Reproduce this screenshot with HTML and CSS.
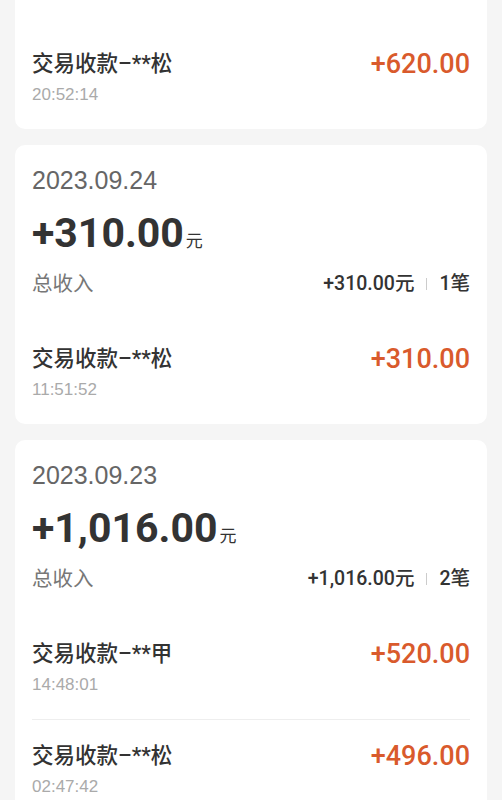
FILE: index.html
```html
<!DOCTYPE html>
<html lang="zh-CN">
<head>
    <meta charset="UTF-8">
    <meta name="viewport" content="width=device-width, initial-scale=1.0">
    <title>收款记录</title>
    <link rel="stylesheet" href="styles.css">
</head>
<body>

    <div class="lista">

        <!-- dia 25 (cortado arriba) -->
        <div class="dia">
            <div class="fecha">2023.09.25</div>
            <div class="total">+620.00<span class="yuan">元</span></div>
            <div class="resumen">
                <span class="etiqueta">总收入</span>
                <span class="cifras">+620.00元<i class="sep"></i>1笔</span>
            </div>
            <div class="mov">
                <div class="info">
                    <div class="titulo">交易收款–**松</div>
                    <div class="hora">20:52:14</div>
                </div>
                <div class="monto">+620.00</div>
            </div>
        </div>

        <div class="dia">
            <div class="fecha">2023.09.24</div>
            <div class="total">+310.00<span class="yuan">元</span></div>
            <div class="resumen">
                <span class="etiqueta">总收入</span>
                <span class="cifras">+310.00元<i class="sep"></i>1笔</span>
            </div>
            <div class="mov">
                <div class="info">
                    <div class="titulo">交易收款–**松</div>
                    <div class="hora">11:51:52</div>
                </div>
                <div class="monto">+310.00</div>
            </div>
        </div>

        <div class="dia">
            <div class="fecha">2023.09.23</div>
            <div class="total">+1,016.00<span class="yuan">元</span></div>
            <div class="resumen">
                <span class="etiqueta">总收入</span>
                <span class="cifras">+1,016.00元<i class="sep"></i>2笔</span>
            </div>
            <div class="mov">
                <div class="info">
                    <div class="titulo">交易收款–**甲</div>
                    <div class="hora">14:48:01</div>
                </div>
                <div class="monto">+520.00</div>
            </div>
            <div class="mov">
                <div class="info">
                    <div class="titulo">交易收款–**松</div>
                    <div class="hora">02:47:42</div>
                </div>
                <div class="monto">+496.00</div>
            </div>
        </div>

    </div>

</body>
</html>
```

FILE: styles.css
```css
/* GENERAL */
body {
    margin: 0;
    background-color: #f5f5f5;
    font-family: Roboto, "Noto Sans CJK SC", sans-serif;
    color: #333;
    overflow: hidden;
}

.lista {
    display: flex;
    flex-direction: column;
    gap: 16px;
    padding: 0 15px;
    margin-top: -150px; /* la vista esta desplazada */
}

/* TARJETA DE UN DIA */
.dia {
    background: #fff;
    border-radius: 10px;
    padding: 20px 17px 0;
}

.fecha {
    font-family: "Liberation Sans", "Noto Sans CJK SC", sans-serif;
    font-size: 25px;
    line-height: 30px;
    color: #666;
}

.total {
    margin-top: 8px;
    font-size: 41px;
    line-height: 60px;
    font-weight: 700;
    color: #333;
}
.yuan {
    font-size: 17px;
    line-height: 1;
    font-weight: 400;
    margin-left: 2px;
}

.resumen {
    display: flex;
    justify-content: space-between;
    align-items: center;
    margin-top: 6px;
    height: 30px;
    padding-bottom: 24px;
}
.etiqueta { font-size: 20.5px; line-height: 30px; color: #777; }
.cifras {
    display: flex;
    align-items: center;
    font-size: 19.5px;
    line-height: 30px;
    font-weight: 500;
    color: #333;
}
.sep {
    width: 1px;
    height: 12px;
    background: #ccc;
    margin: 0 12px;
}

/* MOVIMIENTOS */
.mov {
    display: flex;
    justify-content: space-between;
    align-items: flex-start;
    padding: 21px 0 22px;
}
.mov + .mov { border-top: 1px solid #eee; }

.titulo {
    font-size: 21.5px;
    line-height: 30px;
    font-weight: 500;
    color: #333;
}
.hora {
    margin-top: 4px;
    font-family: "Liberation Sans", sans-serif;
    font-size: 17px;
    line-height: 24px;
    color: #aaa;
}
.monto {
    font-size: 27px;
    line-height: 30px;
    font-weight: 500;
    color: #d95a2c;
}
```
